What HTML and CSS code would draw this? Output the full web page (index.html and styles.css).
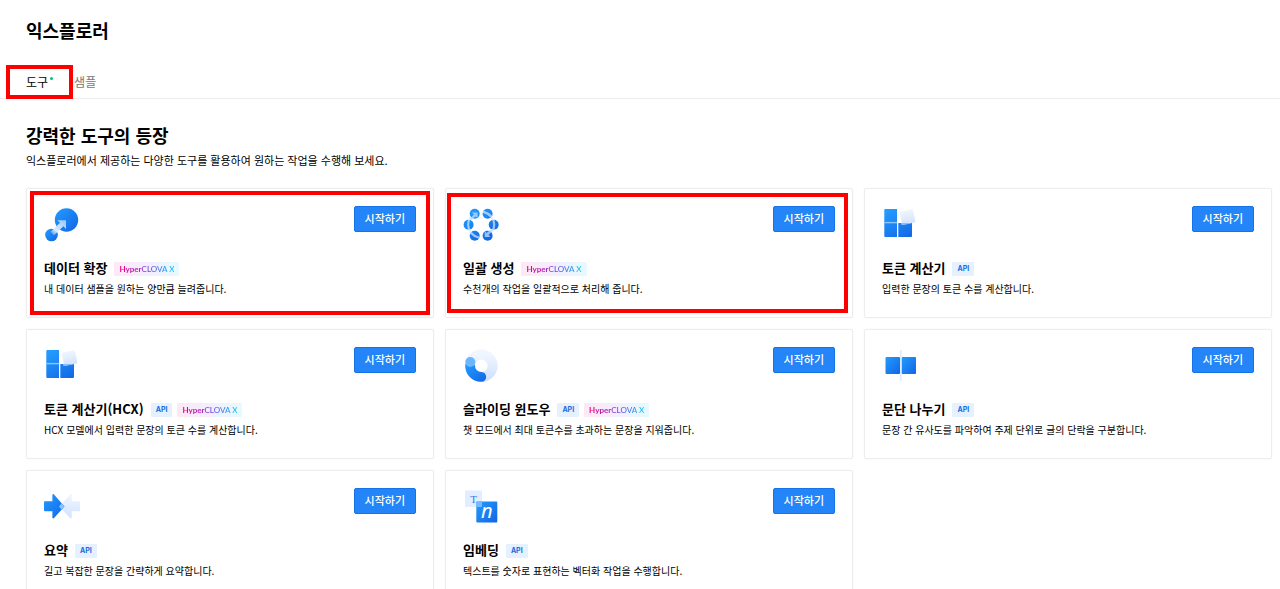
FILE: index.html
```
<!DOCTYPE html>
<html lang="ko">
<head>
    <meta charset="UTF-8">
    <meta name="viewport" content="width=device-width, initial-scale=1">
    <title>익스플로러</title>
    <link rel="stylesheet" href="styles.css">
</head>
<body>
    <!-- 아이콘 공용 그라데이션 -->
    <svg class="defs" width="0" height="0" aria-hidden="true">
        <defs>
            <linearGradient id="blue" x1="0" y1="0" x2="1" y2="1">
                <stop offset="0" stop-color="#239cff"/>
                <stop offset="1" stop-color="#1265e4"/>
            </linearGradient>
            <linearGradient id="pale" x1="0" y1="0" x2="0" y2="1">
                <stop offset="0" stop-color="#f0f6ff"/>
                <stop offset="1" stop-color="#d3e3fd"/>
            </linearGradient>
            <linearGradient id="all" gradientUnits="userSpaceOnUse" x1="8" y1="3" x2="26" y2="34">
                <stop offset="0" stop-color="#239cff"/>
                <stop offset="1" stop-color="#1265e4"/>
            </linearGradient>
            <linearGradient id="tail" gradientUnits="userSpaceOnUse" x1="7" y1="30" x2="21" y2="16">
                <stop offset="0" stop-color="#fff" stop-opacity="0"/>
                <stop offset=".4" stop-color="#dceaff"/>
                <stop offset="1" stop-color="#9dccff"/>
            </linearGradient>
            <symbol id="token" viewBox="0 0 36 36">
                <path d="M2.3 4a1 1 0 0 1 1-1H15v28H3.300a1 1 0 0 1-1-1z" fill="url(#all)"/>
                <path d="M16.300 17H30v13a1 1 0 0 1-1 1H16.300z" fill="url(#all)"/>
                <path d="M2.300 16.600H15" stroke="#8dc6ff" stroke-width="1.400"/>
                <rect x="18.700" y="4.200" width="13.600" height="13.600" rx="1" fill="url(#pale)" transform="rotate(-12 25.500 11)"/>
                <path d="M19 17h9.500l-.2.7-8.900 1.400z" fill="#8dbcfb"/>
            </symbol>
        </defs>
    </svg>

    <header class="header">
        <h1>익스플로러</h1>
        <nav class="tabs">
            <a href="#tools" class="tab active">도구<i class="dot"></i></a>
            <a href="#samples" class="tab">샘플</a>
        </nav>
    </header>

    <main class="content" id="tools">
        <h2>강력한 도구의 등장</h2>
        <p class="lead">익스플로러에서 제공하는 다양한 도구를 활용하여 원하는 작업을 수행해 보세요.</p>

        <div class="grid">
            <article class="card marked">
                <div class="top">
                    <svg class="icon" viewBox="0 0 36 36">
                        <circle cx="22.5" cy="14" r="11.7" fill="url(#blue)"/>
                        <circle cx="7.5" cy="29" r="6.3" fill="url(#blue)"/>
                        <path d="M13.5 14.3H22v8.6l-2.6-2.6L10 29.2l-3.4-3.4 9.4-9z" fill="url(#tail)"/>
                    </svg>
                    <button type="button" class="btn">시작하기</button>
                </div>
                <div class="name">
                    <h3>데이터 확장</h3>
                    <span class="badge hcx"><span><b>Hyper</b>CLOVA X</span></span>
                </div>
                <p>내 데이터 샘플을 원하는 양만큼 늘려줍니다.</p>
            </article>

            <article class="card marked second">
                <div class="top">
                    <svg class="icon" viewBox="0 0 36 36">
                        <g fill="url(#all)">
                            <circle cx="11.7" cy="7.7" r="5"/>
                            <circle cx="24.6" cy="7.7" r="5"/>
                            <circle cx="5.6" cy="18.7" r="5"/>
                            <circle cx="30.7" cy="18.7" r="5"/>
                            <circle cx="11.7" cy="29.7" r="5"/>
                            <circle cx="24.6" cy="29.7" r="5"/>
                        </g>
                        <path d="M20 5.6Q31 9 31.200 18.700q0 4-2.200 7.500M16.300 31.800Q5.300 28.400 5.100 18.700q0-4 2.200-7.500" fill="none" stroke="#dbe9ff" stroke-width="2.200" opacity=".7"/>
                        <path d="M8.800 6.400h5.800v5.700l-1.900-1.700-4.500 3.700-1.400-1.400 4-4.300zM27.500 31h-5.800v-5.700l1.900 1.700 4.500-3.700 1.400 1.400-4 4.300z" fill="#b5d7ff" opacity=".8"/>
                    </svg>
                    <button type="button" class="btn">시작하기</button>
                </div>
                <div class="name">
                    <h3>일괄 생성</h3>
                    <span class="badge hcx"><span><b>Hyper</b>CLOVA X</span></span>
                </div>
                <p>수천개의 작업을 일괄적으로 처리해 줍니다.</p>
            </article>

            <article class="card">
                <div class="top">
                    <svg class="icon"><use href="#token"/></svg>
                    <button type="button" class="btn">시작하기</button>
                </div>
                <div class="name">
                    <h3>토큰 계산기</h3>
                    <span class="badge">API</span>
                </div>
                <p>입력한 문장의 토큰 수를 계산합니다.</p>
            </article>

            <article class="card">
                <div class="top">
                    <svg class="icon"><use href="#token"/></svg>
                    <button type="button" class="btn">시작하기</button>
                </div>
                <div class="name">
                    <h3>토큰 계산기(HCX)</h3>
                    <span class="badge">API</span>
                    <span class="badge hcx"><span><b>Hyper</b>CLOVA X</span></span>
                </div>
                <p>HCX 모델에서 입력한 문장의 토큰 수를 계산합니다.</p>
            </article>

            <article class="card">
                <div class="top">
                    <svg class="icon" viewBox="0 0 36 36">
                        <circle cx="18.3" cy="18.7" r="11.3" fill="none" stroke="url(#pale)" stroke-width="10"/>
                        <path d="M2.3 17a16 16 0 0 0 16 17.800c6.500 0 6.500-9.600 0-9.800a6.300 6.300 0 0 1-6.300-7z" fill="url(#blue)"/>
                        <circle cx="7.300" cy="15" r="5" fill="#6bb6ff"/>
                    </svg>
                    <button type="button" class="btn">시작하기</button>
                </div>
                <div class="name">
                    <h3>슬라이딩 윈도우</h3>
                    <span class="badge">API</span>
                    <span class="badge hcx"><span><b>Hyper</b>CLOVA X</span></span>
                </div>
                <p>챗 모드에서 최대 토큰수를 초과하는 문장을 지워줍니다.</p>
            </article>

            <article class="card">
                <div class="top">
                    <svg class="icon" viewBox="0 0 36 36">
                        <rect x="3.500" y="10" width="14.500" height="17" rx="1" fill="url(#blue)"/>
                        <rect x="19.500" y="10" width="14.500" height="17" rx="1" fill="url(#blue)"/>
                        <path d="M18.800 3v31" stroke="#dcebff" stroke-width="1.600"/>
                    </svg>
                    <button type="button" class="btn">시작하기</button>
                </div>
                <div class="name">
                    <h3>문단 나누기</h3>
                    <span class="badge">API</span>
                </div>
                <p>문장 간 유사도를 파악하여 주제 단위로 글의 단락을 구분합니다.</p>
            </article>

            <article class="card">
                <div class="top">
                    <svg class="icon" viewBox="0 0 36 36">
                        <path d="M36 14.3a1 1 0 0 0-1-1h-7.300V7c0-1-1-1.200-1.600-.6L15 18.500l11.100 11.600c.6.6 1.600.4 1.600-.6v-6.300H35a1 1 0 0 0 1-1z" fill="url(#pale)"/>
                        <path d="M0 14.300a1 1 0 0 1 1-1h7.400V7c0-1 1-1.200 1.600-.6l10.500 12.100L10 30.100c-.6.6-1.600.4-1.600-.6v-6.300H1a1 1 0 0 1-1-1z" fill="url(#blue)"/>
                        <path d="M17.600 15.200l2.900 3.300-2.900 3.200L15 18.500z" fill="#8fc0fb"/>
                    </svg>
                    <button type="button" class="btn">시작하기</button>
                </div>
                <div class="name">
                    <h3>요약</h3>
                    <span class="badge">API</span>
                </div>
                <p>길고 복잡한 문장을 간략하게 요약합니다.</p>
            </article>

            <article class="card">
                <div class="top">
                    <svg class="icon" viewBox="0 0 36 36">
                        <rect x="2" y="2.500" width="17" height="16.500" rx="1" fill="#e1eeff"/>
                        <rect x="13.300" y="13.500" width="21" height="21" rx="1" fill="url(#blue)"/>
                        <rect x="13.300" y="13.500" width="5.700" height="5.500" fill="#79b9ff"/>
                        <text x="10.500" y="14.500" class="glyph-t">T</text>
                        <text x="23.800" y="29.500" class="glyph-n">n</text>
                    </svg>
                    <button type="button" class="btn">시작하기</button>
                </div>
                <div class="name">
                    <h3>임베딩</h3>
                    <span class="badge">API</span>
                </div>
                <p>텍스트를 숫자로 표현하는 벡터화 작업을 수행합니다.</p>
            </article>
        </div>
    </main>
</body>
</html>
```
FILE: styles.css
```
*{ box-sizing:border-box; }
body,h1,h2,h3,p{ margin:0; }
body{
    background:#fff;
    color:#000;
    font-family:"Noto Sans CJK KR","Noto Sans",sans-serif;
}
.defs{ position:absolute; }

.header{
    padding:17px 26px 0;
    border-bottom:1px solid #ececec;
}
.header h1,.content h2{
    font-size:18px;
    line-height:26px;
    font-weight:700;
}
.tabs{
    display:flex;
    gap:26px;
    margin-top:23px;
}
.tab{
    position:relative;
    font-size:12px;
    line-height:32px;
    color:#777;
    text-decoration:none;
}
.tab.active{ color:#000; }
.tab.active::after{
    content:"";
    position:absolute;
    top:-1px;
    right:-25px;
    bottom:-1px;
    left:-20px;
    border:4px solid #f00;
}
.dot{
    position:absolute;
    top:11px;
    right:-5px;
    width:3px;
    height:3px;
    border-radius:50%;
    background:#00c373;
}

.content{ padding:23px 8px 24px 26px; }
.lead{
    margin-top:3px;
    font-size:11px;
    line-height:18px;
}
.grid{
    display:grid;
    grid-template-columns:repeat(3,1fr);
    gap:11px;
    margin-top:19px;
}
.card{
    position:relative;
    padding:17px 17px 20px;
    border:1px solid #ededed;
    border-radius:2px;
    box-shadow:0 0 2px rgba(0,0,0,.06);
}
/* 강조 테두리 */
.card.marked::after{
    content:"";
    position:absolute;
    top:2px;
    right:3px;
    bottom:2px;
    left:3px;
    border:4px solid #f00;
    pointer-events:none;
}
.card.second::after{
    top:4px;
    right:4px;
    bottom:4px;
    left:1px;
}
.top{
    display:flex;
    justify-content:space-between;
    align-items:flex-start;
}
.icon{
    display:block;
    width:36px;
    height:36px;
    overflow:visible;
}
.btn{
    height:26px;
    padding:0 10px 2px;
    border:1px solid #1673e6;
    border-radius:2px;
    background:#2385f8;
    color:#fff;
    font-family:inherit;
    font-size:11px;
    font-weight:500;
    line-height:20px;
    cursor:pointer;
}
.name{
    display:flex;
    align-items:center;
    gap:5px;
    margin-top:16px;
}
.name h3{
    margin-right:2px;
    font-size:13px;
    line-height:20px;
    font-weight:700;
}
.badge{
    margin-top:2px;
    padding:0 5px;
    border-radius:1px;
    background:#e6f1ff;
    color:#1a6be0;
    font-family:Inter,sans-serif;
    font-size:7px;
    font-weight:700;
    line-height:14px;
}
.badge.hcx{
    background:linear-gradient(90deg,#ffe8f4,#f3eeff 50%,#e6faff);
    font-family:Lato,sans-serif;
    font-size:8px;
    font-weight:500;
}
.badge.hcx span{
    display:block;
    background:linear-gradient(90deg,#e6007e,#b01fc0 35%,#5a50dc 60%,#00c8f0);
    -webkit-background-clip:text;
    background-clip:text;
    color:transparent;
}
.card p{
    margin-top:3px;
    font-size:10px;
    line-height:16px;
}
.glyph-t{
    fill:#2f80e8;
    font:11px "Liberation Serif",serif;
    text-anchor:middle;
}
.glyph-n{
    fill:#fff;
    font:italic 20px "Noto Sans",sans-serif;
    text-anchor:middle;
}
```
